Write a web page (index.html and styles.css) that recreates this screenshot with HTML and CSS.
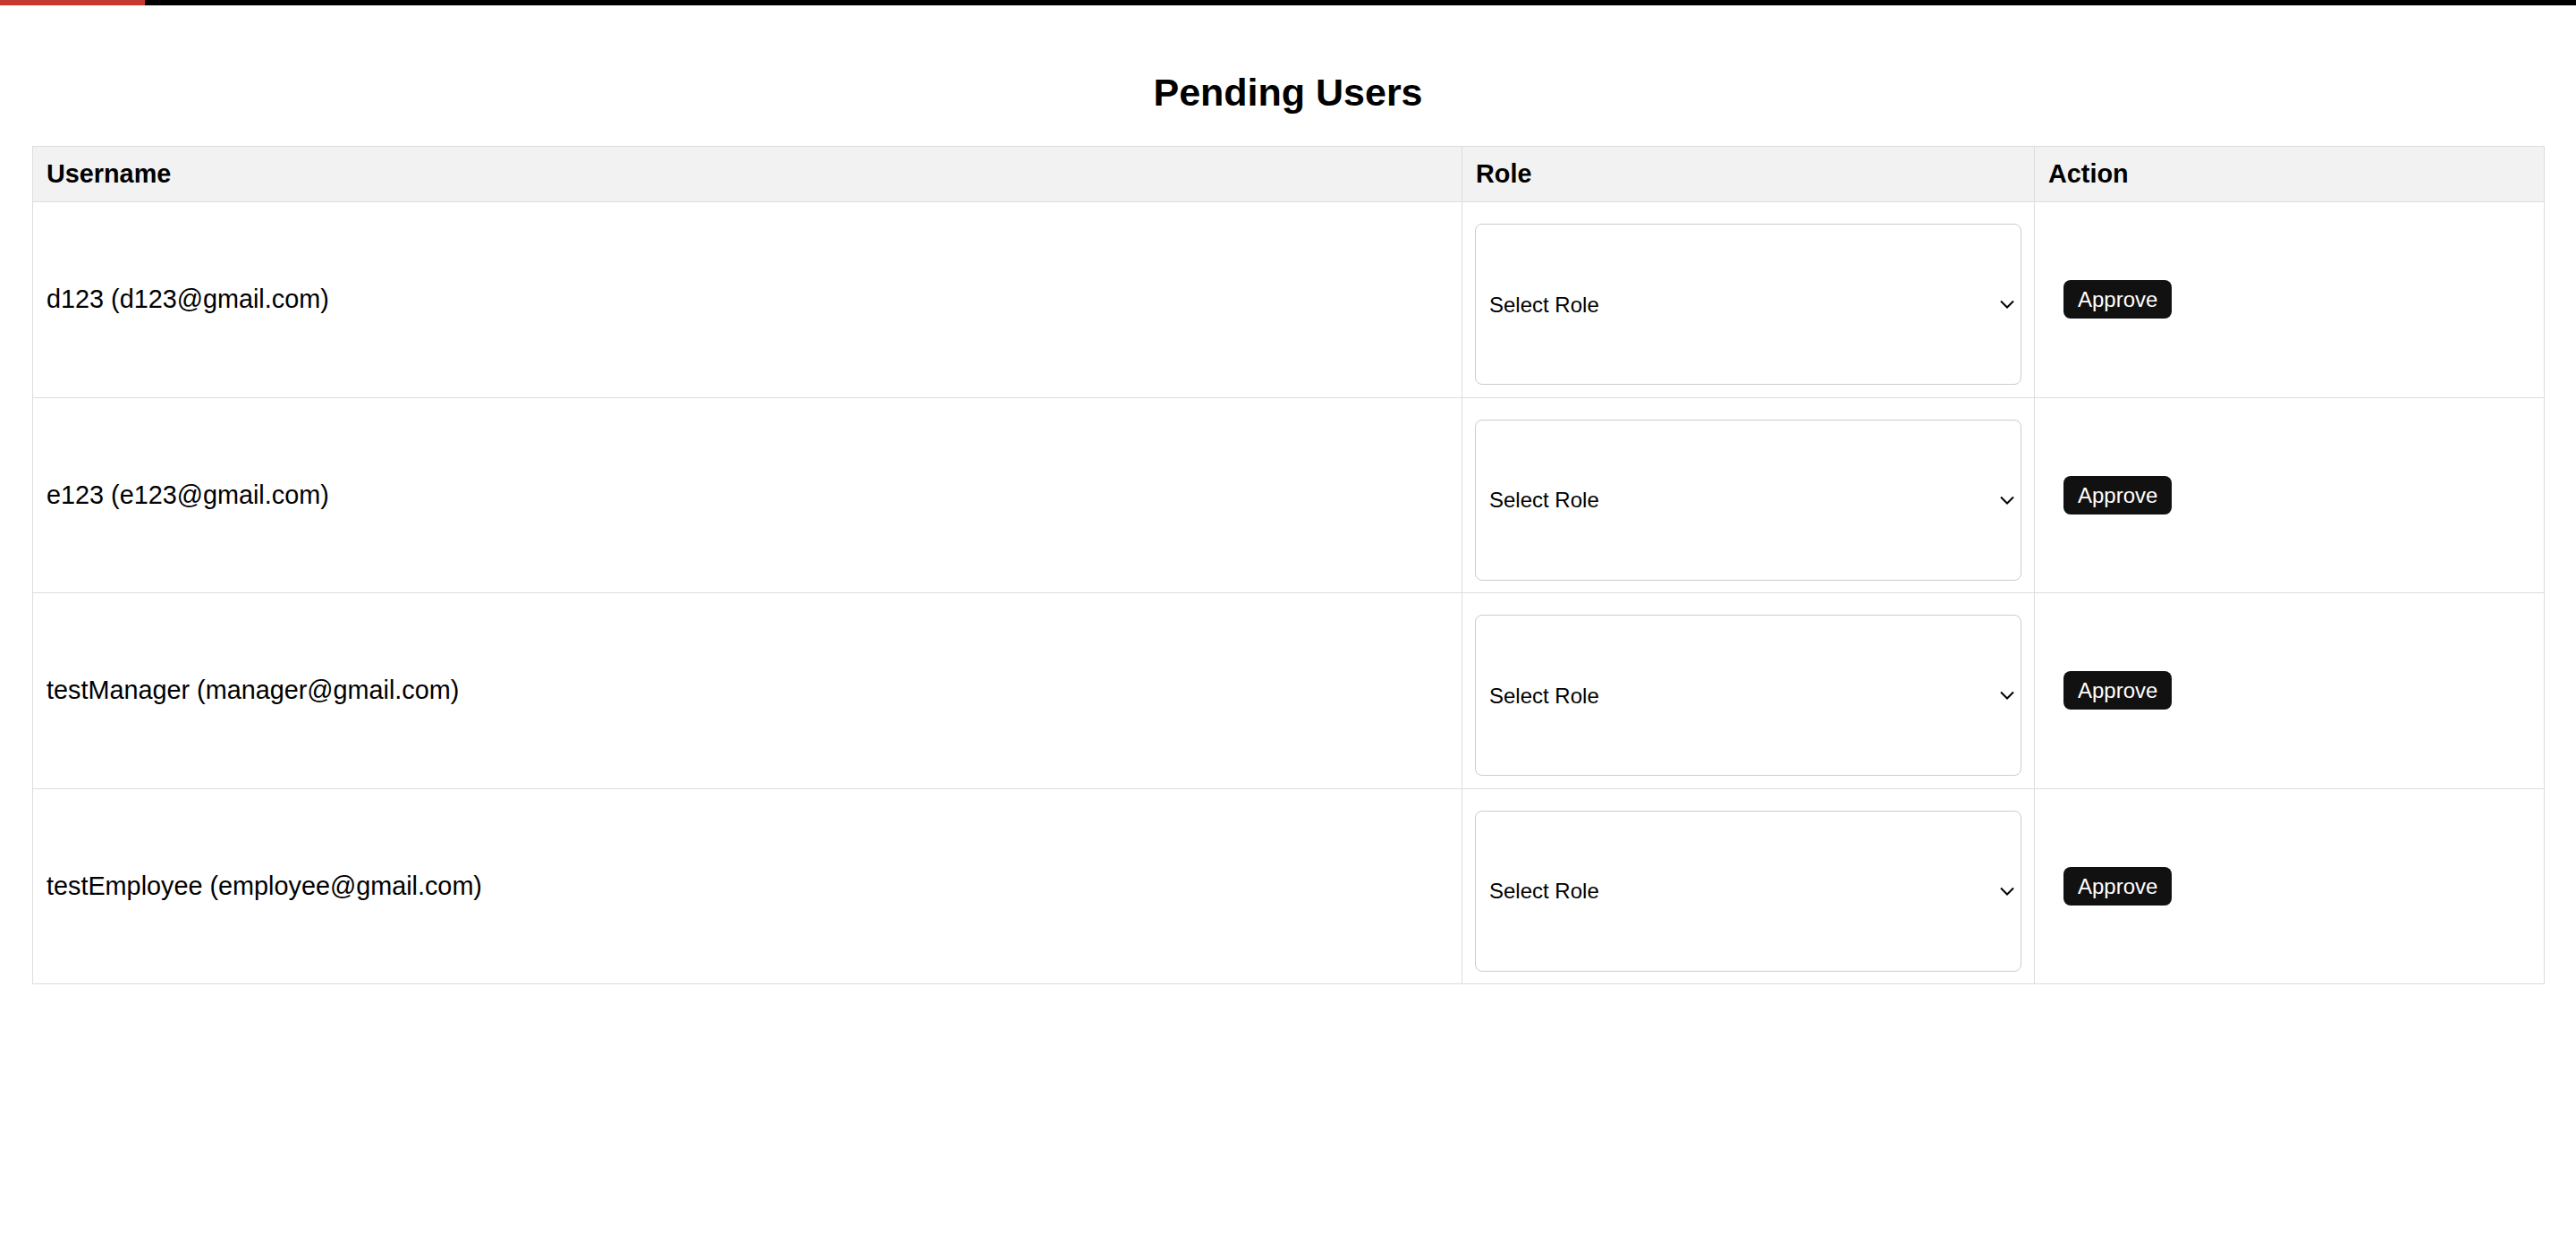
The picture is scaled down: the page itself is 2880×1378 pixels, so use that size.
FILE: index.html
```html
<!DOCTYPE html>
<html lang="en">
<head>
<meta charset="utf-8">
<title>Pending Users</title>
<link rel="stylesheet" href="styles.css">
</head>
<body>
<div class="topbar"><div class="topbar-progress"></div></div>
<main class="page">
  <h2 class="title">Pending Users</h2>
  <table class="users">
    <colgroup>
      <col class="col-user">
      <col class="col-role">
      <col class="col-action">
    </colgroup>
    <thead>
      <tr><th>Username</th><th>Role</th><th>Action</th></tr>
    </thead>
    <tbody>
      <tr>
        <td class="user-cell">d123 (d123@gmail.com)</td>
        <td class="role-cell">
          <div class="select-wrap">
            <select class="role-select"><option>Select Role</option><option>Manager</option><option>Employee</option></select>
            <svg class="chevron" viewBox="0 0 16 10" width="16" height="10"><path d="M1 1.5 L8 8.5 L15 1.5" fill="none" stroke="#000" stroke-width="2"/></svg>
          </div>
        </td>
        <td class="action-cell"><button class="approve">Approve</button></td>
      </tr>
      <tr>
        <td class="user-cell">e123 (e123@gmail.com)</td>
        <td class="role-cell">
          <div class="select-wrap">
            <select class="role-select"><option>Select Role</option><option>Manager</option><option>Employee</option></select>
            <svg class="chevron" viewBox="0 0 16 10" width="16" height="10"><path d="M1 1.5 L8 8.5 L15 1.5" fill="none" stroke="#000" stroke-width="2"/></svg>
          </div>
        </td>
        <td class="action-cell"><button class="approve">Approve</button></td>
      </tr>
      <tr>
        <td class="user-cell">testManager (manager@gmail.com)</td>
        <td class="role-cell">
          <div class="select-wrap">
            <select class="role-select"><option>Select Role</option><option>Manager</option><option>Employee</option></select>
            <svg class="chevron" viewBox="0 0 16 10" width="16" height="10"><path d="M1 1.5 L8 8.5 L15 1.5" fill="none" stroke="#000" stroke-width="2"/></svg>
          </div>
        </td>
        <td class="action-cell"><button class="approve">Approve</button></td>
      </tr>
      <tr>
        <td class="user-cell">testEmployee (employee@gmail.com)</td>
        <td class="role-cell">
          <div class="select-wrap">
            <select class="role-select"><option>Select Role</option><option>Manager</option><option>Employee</option></select>
            <svg class="chevron" viewBox="0 0 16 10" width="16" height="10"><path d="M1 1.5 L8 8.5 L15 1.5" fill="none" stroke="#000" stroke-width="2"/></svg>
          </div>
        </td>
        <td class="action-cell"><button class="approve">Approve</button></td>
      </tr>
    </tbody>
  </table>
</main>
</body>
</html>
```
FILE: styles.css
```css
* { box-sizing: border-box; }

body {
  margin: 0;
  background: #fff;
  color: #000;
  font-family: "Liberation Sans", Arial, Helvetica, sans-serif;
}

.topbar {
  display: flex;
  height: 6px;
  background: #000;
}

.topbar-progress {
  width: 162px;
  background: #c5392f;
}

.page {
  padding: 0 36px;
}

.title {
  margin: 73px 0 35px;
  font-size: 43px;
  line-height: 49px;
  font-weight: 700;
  text-align: center;
}

.users {
  width: 100%;
  border-collapse: collapse;
  table-layout: fixed;
  font-size: 28.8px;
}

.col-user { width: 1598px; }
.col-role { width: 640px; }
.col-action { width: 570px; }

.users th,
.users td {
  border: 1px solid #ddd;
  text-align: left;
  vertical-align: middle;
}

.users th {
  background: #f2f2f2;
  font-weight: 700;
  line-height: 33px;
  padding: 14px 15px;
}

.user-cell {
  padding: 16px 15px;
  line-height: 33px;
}

.role-cell {
  padding: 24px 14px 13.5px 14px;
}

.select-wrap {
  position: relative;
}

.role-select {
  display: block;
  width: 100%;
  height: 180px;
  margin: 0;
  padding: 0 40px 0 15px;
  appearance: none;
  -webkit-appearance: none;
  background: #fff;
  color: #000;
  border: 1px solid #ccc;
  border-radius: 8px;
  font-family: "Liberation Sans", Arial, Helvetica, sans-serif;
  font-size: 24px;
}

.chevron {
  position: absolute;
  right: 8px;
  top: 50%;
  margin-top: -5px;
}

.action-cell {
  padding: 16px;
}

.approve {
  margin-left: 16px;
  padding: 8px 16px;
  background: #111;
  color: #fff;
  border: none;
  border-radius: 8px;
  font-family: "Liberation Sans", Arial, Helvetica, sans-serif;
  font-size: 24px;
  line-height: 27px;
}
```
